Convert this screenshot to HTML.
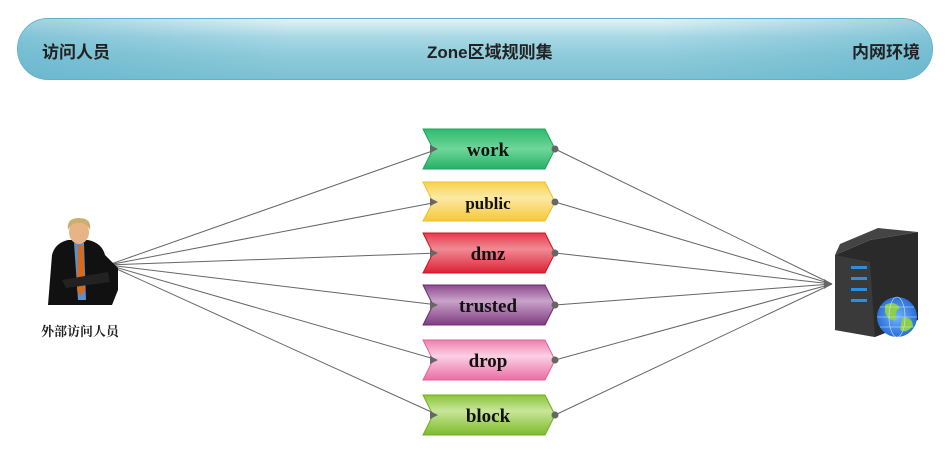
<!DOCTYPE html>
<html><head><meta charset="utf-8"><style>
body{margin:0;width:948px;height:457px;background:#fff;overflow:hidden;font-family:"Liberation Sans","Noto Sans CJK SC",sans-serif;position:relative}
.bar{position:absolute;left:17px;top:18px;width:916px;height:62px;border-radius:31px;border:1px solid #5fb3c9;box-sizing:border-box;
background:linear-gradient(180deg,#e4f3f7 0%,#a9d8e5 30%,#8fcbdb 60%,#7dc1d4 100%);}
.bar:after{content:"";position:absolute;inset:0;border-radius:31px;background:linear-gradient(90deg,rgba(90,175,200,.5),rgba(255,255,255,0) 30%,rgba(255,255,255,0) 70%,rgba(90,175,200,.5))}
.bar span{position:absolute;top:19px;font-size:17px;font-weight:bold;color:#222;z-index:1}
</style></head><body>
<div class="bar"><span style="left:24px">访问人员</span><span style="left:409px">Zone区域规则集</span><span style="right:12px">内网环境</span></div>
<svg width="948" height="457" style="position:absolute;left:0;top:0">
<defs>
<linearGradient id="gw" x1="0" y1="0" x2="0" y2="1"><stop offset="0" stop-color="#2fba6e"/><stop offset=".5" stop-color="#6fd69a"/><stop offset="1" stop-color="#27b066"/></linearGradient>
<linearGradient id="gp" x1="0" y1="0" x2="0" y2="1"><stop offset="0" stop-color="#f8d24a"/><stop offset=".4" stop-color="#fbe9a6"/><stop offset="1" stop-color="#f5c93a"/></linearGradient>
<linearGradient id="gd" x1="0" y1="0" x2="0" y2="1"><stop offset="0" stop-color="#e53a4a"/><stop offset=".4" stop-color="#f08a94"/><stop offset="1" stop-color="#dc2236"/></linearGradient>
<linearGradient id="gt" x1="0" y1="0" x2="0" y2="1"><stop offset="0" stop-color="#8d4b8d"/><stop offset=".4" stop-color="#c9a2c9"/><stop offset="1" stop-color="#7e3c80"/></linearGradient>
<linearGradient id="gr" x1="0" y1="0" x2="0" y2="1"><stop offset="0" stop-color="#ee7fb0"/><stop offset=".4" stop-color="#fbd0e3"/><stop offset="1" stop-color="#ea6ea5"/></linearGradient>
<linearGradient id="gb" x1="0" y1="0" x2="0" y2="1"><stop offset="0" stop-color="#8cc53a"/><stop offset=".4" stop-color="#c8e69a"/><stop offset="1" stop-color="#7dbb2a"/></linearGradient>
<radialGradient id="gl"><stop offset="0" stop-color="#6fb3ff"/><stop offset="1" stop-color="#2a6fd6"/></radialGradient>
</defs>
<g stroke="#666" stroke-width="1" fill="none">
<line x1="108" y1="265" x2="438" y2="149"/><line x1="108" y1="265" x2="438" y2="202"/><line x1="108" y1="265" x2="438" y2="253"/><line x1="108" y1="265" x2="438" y2="305"/><line x1="108" y1="265" x2="438" y2="360"/><line x1="108" y1="265" x2="438" y2="415"/>
<line x1="555" y1="149" x2="832" y2="284"/><line x1="555" y1="202" x2="832" y2="284"/><line x1="555" y1="253" x2="832" y2="284"/><line x1="555" y1="305" x2="832" y2="284"/><line x1="555" y1="360" x2="832" y2="284"/><line x1="555" y1="415" x2="832" y2="284"/>
</g>
<g font-family="Liberation Serif,serif" font-weight="bold" font-size="19" text-anchor="middle" fill="#111">
<path d="M423 129H545L555 149L545 169H423L433 149Z" fill="url(#gw)" stroke="#1ea35a"/><text x="488" y="156">work</text>
<path d="M423 182H545L555 202L545 221H423L433 202Z" fill="url(#gp)" stroke="#efbd2a"/><text x="488" y="209" font-size="17">public</text>
<path d="M423 233H545L555 253L545 273H423L433 253Z" fill="url(#gd)" stroke="#d01020"/><text x="488" y="260">dmz</text>
<path d="M423 285H545L555 305L545 325H423L433 305Z" fill="url(#gt)" stroke="#6d2a70"/><text x="488" y="312">trusted</text>
<path d="M423 340H545L555 360L545 380H423L433 360Z" fill="url(#gr)" stroke="#e2609a"/><text x="488" y="367">drop</text>
<path d="M423 395H545L555 415L545 435H423L433 415Z" fill="url(#gb)" stroke="#6fae1e"/><text x="488" y="422">block</text>
</g>
<g fill="#666"><circle cx="555" cy="149" r="3.5"/><circle cx="555" cy="202" r="3.5"/><circle cx="555" cy="253" r="3.5"/><circle cx="555" cy="305" r="3.5"/><circle cx="555" cy="360" r="3.5"/><circle cx="555" cy="415" r="3.5"/>
<path d="M438 149l-8-4v8zM438 202l-8-4v8zM438 253l-8-4v8zM438 305l-8-4v8zM438 360l-8-4v8zM438 415l-8-4v8z"/>
<path d="M832 284l-8-5v10z"/></g>
<!-- person -->
<path d="M48 305L52 255Q55 243 68 240L88 240Q102 243 105 255L118 268L118 290L112 305Z" fill="#111"/>
<path d="M74 243L84 243L86 300L78 300Z" fill="#5a8fd0"/>
<path d="M78 245L83 245L85 290L80 296L77 290Z" fill="#d86a1a"/>
<ellipse cx="79" cy="232" rx="10" ry="12" fill="#e8b486"/>
<path d="M68 230Q66 218 79 218Q92 218 90 230Q86 222 79 223Q72 222 68 230Z" fill="#c8b070"/>
<path d="M62 280L108 272L110 282L66 288Z" fill="#222"/>
<text x="80" y="336" font-size="13" font-weight="bold" text-anchor="middle" fill="#222" font-family="Liberation Serif,'Noto Serif CJK SC',serif">外部访问人员</text>
<!-- server -->
<path d="M835 255L870 240L918 232L918 320L875 337L835 330Z" fill="#2a2a2a"/>
<path d="M835 255L870 240L918 232L878 228L840 244Z" fill="#444"/>
<path d="M835 255L870 262L875 337L835 330Z" fill="#3a3a3a"/>
<g fill="#2a8fe0"><rect x="851" y="266" width="16" height="3"/><rect x="851" y="277" width="16" height="3"/><rect x="851" y="288" width="16" height="3"/><rect x="851" y="299" width="16" height="3"/></g>
<circle cx="897" cy="317" r="20" fill="url(#gl)"/>
<path d="M885 305Q895 300 900 308Q893 312 897 320Q888 322 885 312Z M902 318Q912 316 913 326Q906 334 900 330Z" fill="#8ccf4a"/>
<g stroke="#cfe4ff" stroke-width=".6" fill="none"><ellipse cx="897" cy="317" rx="8" ry="20"/><line x1="877" y1="317" x2="917" y2="317"/><line x1="880" y1="307" x2="914" y2="307"/><line x1="880" y1="327" x2="914" y2="327"/></g>
</svg>
</body></html>
